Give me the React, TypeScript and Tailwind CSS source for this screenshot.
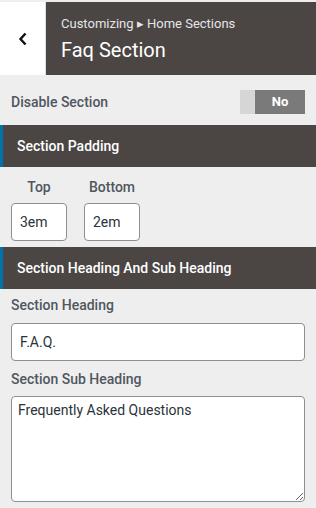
import { useState } from "react";

function SectionHeader({ title }: { title: string }) {
  return (
    <div className="flex h-[42px] items-center border-l-[3px] border-[#0073aa] bg-[#4b4544] pl-[14px] text-[14px] font-medium text-white">
      {title}
    </div>
  );
}

export default function App() {
  const [disabled, setDisabled] = useState(false);
  const [top, setTop] = useState("3em");
  const [bottom, setBottom] = useState("2em");
  const [heading, setHeading] = useState("F.A.Q.");
  const [subHeading, setSubHeading] = useState("Frequently Asked Questions");

  return (
    <div
      className="flex h-[508px] w-[316px] flex-col overflow-hidden bg-[#eeeeee] pt-[2px] text-[#50575e]"
      style={{ fontFamily: "Roboto, 'Liberation Sans', sans-serif" }}
    >
      {/* Header */}
      <div className="flex h-[73px]">
        <button className="flex w-[46px] items-center justify-center border-r border-[#dddddd] bg-white text-[#111]">
          <svg width="10" height="14" viewBox="0 0 10 14" fill="none">
            <path d="M7.5 1.5 2.5 7l5 5.5" stroke="currentColor" strokeWidth="2.4" />
          </svg>
        </button>
        <div className="flex flex-1 flex-col justify-center bg-[#4b4544] pl-[15px]">
          <div className="text-[13px] leading-[16px] text-[#e6e6e6]">Customizing ▸ Home Sections</div>
          <div className="mt-[6px] text-[20px] leading-[24px] text-white">Faq Section</div>
        </div>
      </div>

      {/* Disable section */}
      <div className="flex items-center justify-between px-[11px] pt-[15px] pb-[11px]">
        <span className="text-[14px] font-medium">Disable Section</span>
        <button onClick={() => setDisabled(!disabled)} className="flex h-[24px] w-[65px]">
          <span className="w-[15px] bg-[#d6d6d6]" />
          <span className="flex flex-1 items-center justify-center bg-[#7a7a7a] text-[13px] font-bold text-white">
            {disabled ? "Yes" : "No"}
          </span>
        </button>
      </div>

      <SectionHeader title="Section Padding" />

      <div className="flex gap-[17px] px-[11px] pt-[10px] pb-[6px]">
        <div className="flex w-[56px] flex-col items-center gap-[5px]">
          <span className="text-[14px] font-medium">Top</span>
          <input
            value={top}
            onChange={(e) => setTop(e.target.value)}
            className="h-[38px] w-[56px] rounded-[4px] border border-[#8c8f94] bg-white px-[8px] text-[14px] text-[#2c3338] outline-none"
          />
        </div>
        <div className="flex w-[56px] flex-col items-center gap-[5px]">
          <span className="text-[14px] font-medium">Bottom</span>
          <input
            value={bottom}
            onChange={(e) => setBottom(e.target.value)}
            className="h-[38px] w-[56px] rounded-[4px] border border-[#8c8f94] bg-white px-[8px] text-[14px] text-[#2c3338] outline-none"
          />
        </div>
      </div>

      <SectionHeader title="Section Heading And Sub Heading" />

      <div className="flex flex-col px-[11px] pt-[7px]">
        <label className="text-[14px] font-medium leading-[18px]">Section Heading</label>
        <input
          value={heading}
          onChange={(e) => setHeading(e.target.value)}
          className="mt-[9px] h-[38px] w-full rounded-[4px] border border-[#8c8f94] bg-white px-[8px] text-[14px] text-[#2c3338] outline-none"
        />
        <label className="mt-[9px] text-[14px] font-medium leading-[18px]">Section Sub Heading</label>
        <textarea
          value={subHeading}
          onChange={(e) => setSubHeading(e.target.value)}
          className="mt-[8px] h-[106px] w-full rounded-[4px] border border-[#8c8f94] bg-white px-[6px] py-[3px] text-[14px] text-[#2c3338] outline-none"
        />
      </div>
    </div>
  );
}
